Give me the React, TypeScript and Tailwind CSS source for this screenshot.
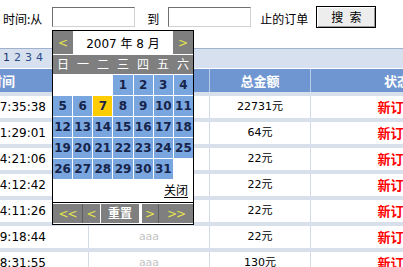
import type { ReactNode } from 'react'

const rows = [
  { time: '2007-08-07 17:35:38', name: 'aaa', amount: '22731元' },
  { time: '2007-08-07 11:29:01', name: 'aaa', amount: '64元' },
  { time: '2007-08-06 14:21:06', name: 'aaa', amount: '22元' },
  { time: '2007-08-06 14:12:42', name: 'aaa', amount: '22元' },
  { time: '2007-08-06 14:11:26', name: 'aaa', amount: '22元' },
  { time: '2007-08-06 09:18:44', name: 'aaa', amount: '22元' },
  { time: '2007-08-06 08:31:55', name: 'aaa', amount: '130元' },
]

const weekdays = ['日', '一', '二', '三', '四', '五', '六']

function TextInput() {
  return (
    <div className="w-[83px] h-[20px] bg-white border border-t-[#6f6f6f] border-l-[#6f6f6f] border-r-[#d2d2d2] border-b-[#d2d2d2]" />
  )
}

function NavBtn({ children, className = '' }: { children: ReactNode; className?: string }) {
  return (
    <div className={`h-full flex items-center justify-center bg-[#7f7f7f] text-[#e4e44c] text-[12px] ${className}`}>
      {children}
    </div>
  )
}

function Calendar() {
  // August 2007 starts on a Wednesday
  const cells: (number | null)[] = [null, null, null]
  for (let d = 1; d <= 31; d++) cells.push(d)

  return (
    <div className="absolute left-[52px] top-[30px] w-[142px] border border-black bg-white z-10">
      {/* month header */}
      <div className="flex items-end h-[23px]">
        <NavBtn className="w-[20px] h-[21px]">&lt;</NavBtn>
        <div className="flex-1 h-full flex items-center justify-center text-[12px] text-black pt-[2px]">
          2007 年 8 月
        </div>
        <NavBtn className="w-[20px] h-[21px]">&gt;</NavBtn>
      </div>

      {/* weekdays */}
      <div className="grid grid-cols-7 h-[19px] bg-[#7f7f7f] text-white text-[12px] mt-px">
        {weekdays.map((w) => (
          <div key={w} className="flex items-center justify-center">{w}</div>
        ))}
      </div>

      {/* days */}
      <div className="grid grid-cols-7 gap-px mt-px">
        {cells.map((d, i) => (
          <div
            key={i}
            className={`h-[20px] flex items-center justify-center text-[12px] font-bold text-[#16244a] ${
              d === null ? 'bg-white' : d === 7 ? 'bg-[#ffcc00]' : 'bg-[#7aa6e0]'
            }`}
          >
            {d}
          </div>
        ))}
      </div>

      <div className="h-[23px] flex items-center justify-end pr-[5px] text-[12px] text-black">
        <span className="underline underline-offset-2">关闭</span>
      </div>

      {/* bottom bar */}
      <div className="flex h-[22px] border-t border-black py-px">
        <NavBtn className="w-[29px] tracking-[-1px]">&lt;&lt;</NavBtn>
        <NavBtn className="w-[18px] border-l border-[#5f5f5f]">&lt;</NavBtn>
        <div className="w-[38px] ml-px h-full flex items-center justify-center bg-[#7f7f7f] text-white font-bold text-[12px]">
          重置
        </div>
        <NavBtn className="w-[16px] ml-[3px]">&gt;</NavBtn>
        <NavBtn className="w-[35px] border-l border-[#5f5f5f] tracking-[-1px]">&gt;&gt;</NavBtn>
      </div>
    </div>
  )
}

export default function App() {
  return (
    <div className="relative w-[403px] h-[267px] overflow-hidden bg-white font-['DejaVu_Sans','Noto_Sans_CJK_SC',sans-serif] text-black">
      {/* search form */}
      <div className="flex items-start h-[35px] pl-[3px] pt-[6px] text-[12px] font-['Noto_Sans_CJK_SC',sans-serif]">
        <span className="mt-[6px] leading-[14px]">时间:从</span>
        <div className="ml-[10px] mt-px"><TextInput /></div>
        <span className="ml-[12px] mt-[6px] leading-[14px]">到</span>
        <div className="ml-[9px] mt-px"><TextInput /></div>
        <span className="ml-[9px] mt-[6px] leading-[14px]">止的订单</span>
        <button className="ml-[8px] w-[60px] h-[22px] flex items-center justify-center gap-[6px] border border-black bg-[#ededed] shadow-[inset_1px_1px_0_#ffffff,inset_-1px_-1px_0_#9a9a9a] text-[12px]">
          <span>搜</span>
          <span>索</span>
        </button>
      </div>

      {/* pager strip */}
      <div className="mt-[13px] h-[20px] border-t border-[#9fb1cd] bg-[#d7e0ee] flex items-center pl-[3px] text-[11px] text-[#2b4c8c] gap-[4px]">
        <span className="text-[#1d3570]">1</span>
        <span>2</span>
        <span>3</span>
        <span>4</span>
      </div>

      {/* table */}
      <div className="mt-px w-[483px]">
        <div className="flex h-[23px] bg-[#6f96d1] text-white font-bold text-[13px] font-['Noto_Sans_CJK_SC',sans-serif]">
          <div className="w-[89px] border-r border-[#b8cbe8] flex items-center">
            <div className="w-[15px] overflow-hidden flex justify-end">
              <span className="whitespace-nowrap">时间</span>
            </div>
          </div>
          <div className="w-[121px] border-r border-[#b8cbe8] flex items-center justify-center">用户</div>
          <div className="w-[101px] border-r border-[#b8cbe8] flex items-center justify-center">总金额</div>
          <div className="w-[172px] flex items-center justify-center">状态</div>
        </div>

        {rows.map((r) => (
          <div key={r.time} className="flex h-[26px] border-t-4 border-[#d8e0ec] text-[11px]">
            <div className="w-[89px] border-r border-[#d3dbe7] flex items-center">
              <div className="w-[46px] overflow-hidden flex justify-end text-[12px]">
                <span className="whitespace-nowrap">{r.time}</span>
              </div>
            </div>
            <div className="w-[121px] border-r border-[#d3dbe7] flex items-center justify-center text-[#c4c4c4]">
              {r.name}
            </div>
            <div className="w-[101px] border-r border-[#d3dbe7] flex items-center justify-center">
              {r.amount}
            </div>
            <div className="w-[172px] flex items-center justify-center text-[#ff0000] font-bold text-[13px] font-['Noto_Sans_CJK_SC',sans-serif]">
              新订单
            </div>
          </div>
        ))}
      </div>

      <Calendar />
    </div>
  )
}
